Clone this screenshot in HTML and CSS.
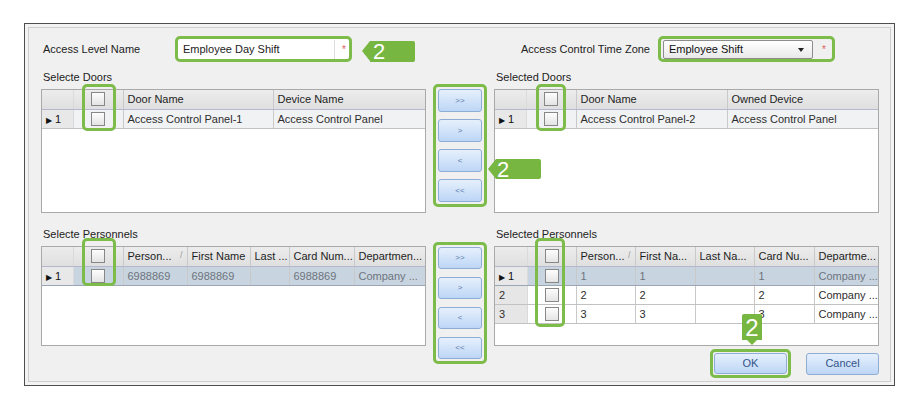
FILE: index.html
```html
<!DOCTYPE html>
<html lang="en">
  <head>
    <meta charset="UTF-8" />
    <meta name="viewport" content="width=device-width, initial-scale=1.0" />
    <title>Access Level</title>
    <link rel="stylesheet" href="styles.css">
  </head>
  <body>
    <div class="window">
      <div class="frame">
        <!-- name and time zone -->
        <div class="top-row">
          <div class="field">
            <span class="label label-name">Access Level Name</span>
            <div class="hl hl-input">
              <span class="text-input">Employee Day Shift</span>
              <span class="req">*</span>
            </div>
            <span class="badge badge-left">2</span>
          </div>
          <div class="field field-right">
            <span class="label">Access Control Time Zone</span>
            <div class="hl hl-select">
              <span class="select">Employee Shift<span class="caret"></span></span>
              <span class="req">*</span>
            </div>
          </div>
        </div>

        <!---------doors----------->
        <div class="section">
          <div class="pane">
            <div class="pane-title">Selecte Doors</div>
            <div class="grid-box doors">
              <table>
                <colgroup><col style="width:31px"><col style="width:50px"><col style="width:150px"><col></colgroup>
                <tr><th class="rh"></th><th class="c"><span class="cb"></span></th><th>Door Name</th><th>Device Name</th></tr>
                <tr class="cur"><td class="rh"><span class="ptr">&#9654;</span> 1</td><td class="c"><span class="cb"></span></td><td>Access Control Panel-1</td><td>Access Control Panel</td></tr>
              </table>
              <div class="hl hl-check" style="left:40px;top:-6px;width:34px;height:47px"></div>
            </div>
          </div>
          <div class="mover">
            <div class="hl hl-mover">
              <span class="mv-btn">&gt;&gt;</span>
              <span class="mv-btn">&gt;</span>
              <span class="mv-btn">&lt;</span>
              <span class="mv-btn">&lt;&lt;</span>
            </div>
            <span class="badge badge-mid">2</span>
          </div>
          <div class="pane">
            <div class="pane-title">Selected Doors</div>
            <div class="grid-box doors">
              <table>
                <colgroup><col style="width:31px"><col style="width:50px"><col style="width:151px"><col></colgroup>
                <tr><th class="rh"></th><th class="c"><span class="cb"></span></th><th>Door Name</th><th>Owned Device</th></tr>
                <tr class="cur"><td class="rh"><span class="ptr">&#9654;</span> 1</td><td class="c"><span class="cb"></span></td><td>Access Control Panel-2</td><td>Access Control Panel</td></tr>
              </table>
              <div class="hl hl-check" style="left:41px;top:-6px;width:30px;height:47px"></div>
            </div>
          </div>
        </div>

        <!---------personnels----------->
        <div class="section section-people">
          <div class="pane">
            <div class="pane-title">Selecte Personnels</div>
            <div class="grid-box people">
              <table>
                <colgroup><col style="width:31px"><col style="width:50px"><col style="width:64px"><col style="width:63px"><col style="width:39px"><col style="width:65px"><col></colgroup>
                <tr><th class="rh"></th><th class="c"><span class="cb"></span></th><th>Person...<span class="sort">/</span></th><th>First Name</th><th>Last ...</th><th>Card Num...</th><th>Departmen...</th></tr>
                <tr class="sel"><td class="rh"><span class="ptr">&#9654;</span> 1</td><td class="c"><span class="cb"></span></td><td>6988869</td><td>6988869</td><td></td><td>6988869</td><td>Company ...</td></tr>
              </table>
              <div class="hl hl-check" style="left:40px;top:-9px;width:34px;height:48px"></div>
            </div>
          </div>
          <div class="mover">
            <div class="hl hl-mover hl-mover-2">
              <span class="mv-btn">&gt;&gt;</span>
              <span class="mv-btn">&gt;</span>
              <span class="mv-btn">&lt;</span>
              <span class="mv-btn">&lt;&lt;</span>
            </div>
          </div>
          <div class="pane">
            <div class="pane-title">Selected Personnels</div>
            <div class="grid-box people">
              <table>
                <colgroup><col style="width:32px"><col style="width:49px"><col style="width:59px"><col style="width:60px"><col style="width:59px"><col style="width:60px"><col></colgroup>
                <tr><th class="rh"></th><th class="c"><span class="cb"></span></th><th>Person...<span class="sort">/</span></th><th>First Na...</th><th>Last Na...</th><th>Card Nu...</th><th>Departme...</th></tr>
                <tr class="sel"><td class="rh"><span class="ptr">&#9654;</span> 1</td><td class="c"><span class="cb"></span></td><td>1</td><td>1</td><td></td><td>1</td><td>Company ...</td></tr>
                <tr><td class="rh">2</td><td class="c"><span class="cb"></span></td><td>2</td><td>2</td><td></td><td>2</td><td>Company ...</td></tr>
                <tr><td class="rh">3</td><td class="c"><span class="cb"></span></td><td>3</td><td>3</td><td></td><td>3</td><td>Company ...</td></tr>
              </table>
              <div class="hl hl-check" style="left:40px;top:-9px;width:30px;height:89px"></div>
            </div>
            <div class="footer">
              <div class="hl hl-ok">
                <span class="btn">OK</span>
                <span class="badge badge-down">2</span>
              </div>
              <span class="btn btn-cancel">Cancel</span>
            </div>
          </div>
        </div>
      </div>
    </div>
  </body>
</html>
```

FILE: styles.css
```css
* {
  box-sizing: border-box;
}
body {
  margin: 23px 0 0 24px;
  background-color: #fff;
  font-family: "Liberation Sans", Arial, sans-serif;
  font-size: 11px;
  color: #222;
}
.window {
  width: 871px;
  height: 363px;
  border: 1px solid #4e4e4e;
  padding: 3px;
  background-color: #f3f3f3;
}
.frame {
  height: 100%;
  border: 1px solid #cdcdcd;
  padding: 8px 11px 0 12px;
  background-color: #f0f0f0;
}

/* shared 3 column layout */
.top-row,
.section {
  display: grid;
  grid-template-columns: 385px 54px 385px;
  column-gap: 7px;
}
.top-row {
  height: 26px;
}
.field {
  display: flex;
  align-items: center;
}
.field-right {
  grid-column: 3;
  margin-left: 27px;
}
.label {
  white-space: nowrap;
  width: 137px;
}
.label-name {
  width: 134px;
  padding-left: 2px;
}

/* green call-outs */
.hl {
  border: 3px solid #7dbb4b;
  border-radius: 5px;
}
.hl-input {
  width: 177px;
  height: 26px;
  display: flex;
  align-items: center;
  background-color: #fff;
  padding: 0 2px;
}
.text-input {
  width: 155px;
  height: 19px;
  line-height: 18px;
  padding-left: 3px;
  border-right: 1px solid #dcdcdc;
}
.req {
  color: #e25c5c;
  font-size: 10px;
  margin-left: 7px;
}
.hl-select {
  width: 177px;
  height: 26px;
  display: flex;
  align-items: center;
  padding: 0 2px;
}
.select {
  position: relative;
  width: 150px;
  height: 19px;
  line-height: 17px;
  padding-left: 5px;
  border: 1px solid #8c8c8c;
  border-radius: 2px;
  background: linear-gradient(#ffffff, #e9e9e9);
  color: #111;
}
.caret {
  position: absolute;
  right: 8px;
  top: 7px;
  border-top: 4px solid #222;
  border-left: 3.5px solid transparent;
  border-right: 3.5px solid transparent;
}
.hl-select .req {
  margin-left: 9px;
}

.badge {
  position: relative;
  display: inline-block;
  height: 21px;
  line-height: 22px;
  background-color: #77b640;
  color: #fff;
  font-size: 22px;
  border-radius: 0 2px 2px 0;
}
.badge::before {
  content: "";
  position: absolute;
  left: -8px;
  top: 0;
  border-right: 8px solid #77b640;
  border-top: 10.5px solid transparent;
  border-bottom: 10.5px solid transparent;
}
.badge-left {
  width: 45px;
  margin: 5px 0 0 18px;
  padding-left: 3px;
}
.badge-mid {
  position: absolute;
  z-index: 2;
  left: 63px;
  top: 92px;
  width: 45px;
  height: 20px;
  line-height: 21px;
  padding-left: 1px;
}
.badge-mid::before {
  border-top-width: 10px;
  border-bottom-width: 10px;
}
.badge-down {
  position: absolute;
  z-index: 2;
  left: 29px;
  top: -38px;
  width: 20px;
  height: 26px;
  line-height: 28px;
  font-size: 24px;
  text-align: center;
  border-radius: 2px 2px 0 0;
}
.badge-down::before {
  left: 5px;
  top: 26px;
  border-right: 5px solid transparent;
  border-left: 5px solid transparent;
  border-top: 5px solid #77b640;
  border-bottom: 0;
}

/* sections */
.section {
  margin-top: 5px;
}
.section-people {
  margin-top: 11px;
}
.pane-title {
  height: 20px;
  line-height: 20px;
  padding-left: 2px;
  margin-bottom: 2px;
  white-space: nowrap;
}
.grid-box {
  position: relative;
  border: 1px solid #a9a9a9;
  background-color: #fff;
}
.doors {
  height: 124px;
}
.people {
  height: 100px;
}
.hl-check {
  position: absolute;
}

table {
  width: 100%;
  border-collapse: collapse;
  table-layout: fixed;
}
th,
td {
  height: 19px;
  padding: 0 4px;
  text-align: left;
  font-weight: normal;
  white-space: nowrap;
  overflow: hidden;
  border-right: 1px solid #c9c9c9;
}
th {
  background: linear-gradient(#ececec, #dfdfdf);
  border-bottom: 1px solid #b5b8cc;
  color: #1e1e1e;
}
th:last-child,
td:last-child {
  border-right: none;
}
td {
  border-bottom: 1px solid #c2c2c2;
  color: #2e2e2e;
}
.rh,
td.rh {
  background-color: #e6e6e6;
  border-right-color: #dadada;
}
.c {
  text-align: center;
}
.cb {
  display: inline-block;
  width: 14px;
  height: 14px;
  vertical-align: middle;
  border: 1px solid #878787;
  background: linear-gradient(#fdfdfd, #e4e4e4);
}
.ptr {
  font-size: 8px;
  color: #111;
}
.sort {
  float: right;
  color: #9a9a9a;
  font-size: 9px;
}
tr.cur td {
  background-color: #f1f2f4;
}
tr.sel td {
  background-color: #c8d4e0;
  color: #6d757e;
  border-bottom-color: #9aa6b2;
}
tr.cur td.rh,
tr.sel td.rh {
  background-color: #e8e8e8;
  color: #111;
}

/* move buttons */
.mover {
  position: relative;
  z-index: 1;
  padding-top: 17px;
}
.hl-mover {
  display: flex;
  flex-direction: column;
  gap: 7px;
  padding: 2px;
}
.hl-mover-2 {
  margin-top: 1px;
  gap: 8px;
}
.mv-btn,
.btn {
  display: block;
  height: 23px;
  line-height: 21px;
  text-align: center;
  border: 1px solid #8eadd5;
  border-radius: 3px;
  background: linear-gradient(#e6f0fc, #bdd6f6);
  color: #5b79a9;
  font-size: 8px;
}
.hl-mover-2 .mv-btn {
  height: 22px;
  line-height: 20px;
}

/* ok / cancel */
.footer {
  display: flex;
  justify-content: flex-end;
  align-items: flex-start;
  gap: 15px;
  margin-top: 3px;
}
.hl-ok {
  position: relative;
  width: 81px;
  padding: 1px;
}
.btn {
  width: 73px;
  height: 21px;
  line-height: 19px;
  font-size: 11px;
  color: #34558a;
}
.btn-cancel {
  width: 73px;
  height: 22px;
  margin-top: 4px;
}
```
